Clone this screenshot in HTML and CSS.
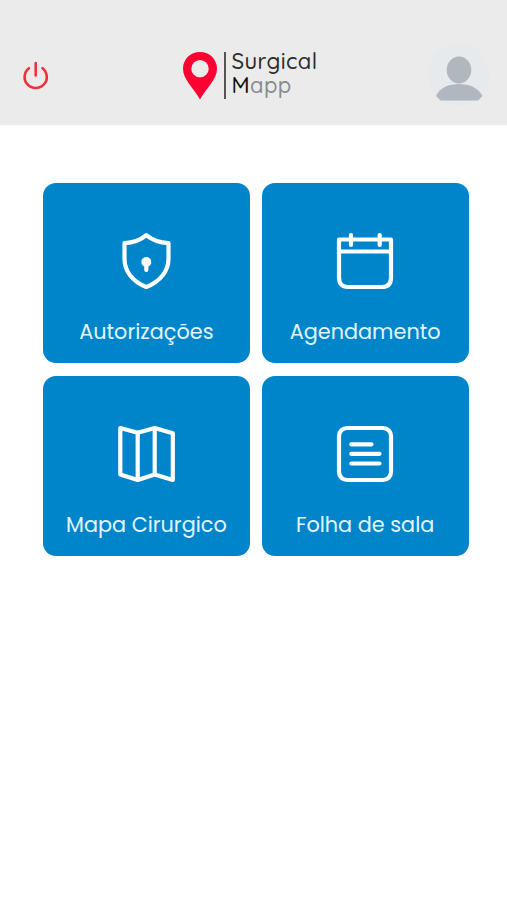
FILE: index.html
```html
<!DOCTYPE html>
<html lang="pt">
<head>
  <meta charset="UTF-8" />
  <meta name="viewport" content="width=device-width, initial-scale=1.0" />
  <title>Surgical Mapp</title>
  <link rel="stylesheet" href="styles.css">
</head>
<body>
  <header class="topbar">
    <button class="logout-button" aria-label="Sair">
      <svg width="28" height="30" viewBox="0 0 28 30" fill="none" stroke="#ee3239" stroke-width="2.6" stroke-linecap="round">
        <path d="M13.700 3v12.500M6.900 8.200a11.100 11.100 0 1 0 13.600 0" />
      </svg>
    </button>

    <div class="logo">
      <svg class="logo-pin" width="34" height="48" viewBox="0 0 34 48">
        <path fill="#ff0032" fill-rule="evenodd" d="M17 0C7.400 0 0 7.400 0 16.700 0 27.500 10.500 35.500 17 47.500 23.500 35.500 34 27.500 34 16.700 34 7.400 26.600 0 17 0ZM17 8a8.700 8.700 0 1 1 0 17.400A8.700 8.700 0 0 1 17 8Z" />
      </svg>
      <div class="logo-text">
        <span class="logo-surgical">Surgical</span>
        <span class="logo-mapp"><b>M</b>app</span>
      </div>
    </div>

    <div class="avatar">
      <svg width="62" height="62" viewBox="0 0 62 62">
        <circle cx="31" cy="31" r="31" fill="#e7eaed" />
        <ellipse cx="31" cy="26" rx="12.300" ry="13.500" fill="#b0b7be" />
        <path d="M8 52C12 43.500 21 40 31 40S50 43.500 54.500 52L50 56.500H12.500Z" fill="#b0b7be" />
      </svg>
    </div>
  </header>

  <main class="menu">
    <a class="card">
      <svg class="card-icon" viewBox="0 0 60 60">
        <path d="M30.300 4.200C25 8.800 17.500 11.700 8.500 12.200V28C8.500 40 16.500 50.500 30.300 56 44 50.500 52.500 40 52.500 28V12.200C43.500 11.700 35.800 8.800 30.300 4.200Z" />
        <circle class="solid" cx="30.300" cy="31" r="5" />
        <path d="M30.300 31v8" />
      </svg>
      <span class="card-label">Autorizações</span>
    </a>

    <a class="card">
      <svg class="card-icon" viewBox="0 0 60 60">
        <path d="M4 8.500H56V46.500Q56 56 47 56H13Q4 56 4 46.500ZM4 20.500H56M16 4v10M44.700 4v10" />
      </svg>
      <span class="card-label">Agendamento</span>
    </a>

    <a class="card">
      <svg class="card-icon" viewBox="0 0 60 60">
        <path d="M4.300 4L21.700 8.700 38.700 4 56.800 9.300V56L38.700 50.500 21.700 56 4.300 50.500ZM21.700 8.700V56M38.700 4V50.500" />
      </svg>
      <span class="card-label">Mapa Cirurgico</span>
    </a>

    <a class="card">
      <svg class="card-icon" viewBox="0 0 60 60">
        <rect x="4" y="4" width="52" height="52" rx="8" />
        <path d="M16.300 20.300H36.500M16.300 29.800H44.500M16.300 39.500H44.500" />
      </svg>
      <span class="card-label">Folha de sala</span>
    </a>
  </main>
</body>
</html>
```
FILE: styles.css
```css
* {
  box-sizing: border-box;
}

body {
  margin: 0;
  min-height: 100vh;
  background-color: #fff;
  font-family: Poppins, "Open Sans", sans-serif;
}

.topbar {
  display: grid;
  grid-template-columns: 1fr auto 1fr;
  align-items: center;
  height: 125px;
  padding: 25px 17px 0 22px;
  background-color: #ebebeb;
}

.logout-button {
  justify-self: start;
  padding: 0;
  border: none;
  background: none;
  cursor: pointer;
}

.logout-button svg,
.logo-pin,
.avatar svg {
  display: block;
}

.logo {
  display: flex;
  align-items: center;
  gap: 7px;
  margin: 1px 12px 0 0;
}

.logo-text {
  display: flex;
  flex-direction: column;
  height: 47px;
  padding-left: 6px;
  border-left: 2px solid #555;
  color: #2b2b2b;
  font-family: Quicksand, Comfortaa, Poppins, sans-serif;
  font-size: 22px;
  font-weight: 500;
  line-height: 24px;
  letter-spacing: 0.4px;
}

.logo-surgical {
  margin-top: -3px;
}

.logo-mapp {
  color: #8a8a8a;
}

.logo-mapp b {
  color: #111;
  font-weight: 500;
}

.avatar {
  justify-self: end;
}

.menu {
  display: grid;
  grid-template-columns: 1fr 1fr;
  grid-auto-rows: 180px;
  gap: 13px 12px;
  padding: 58px 38.500px 0 43px;
}

.card {
  display: flex;
  flex-direction: column;
  align-items: center;
  padding-top: 48px;
  border-radius: 13px;
  background-color: #0085ca;
  color: #e2f5ff;
  cursor: pointer;
}

.card-icon {
  width: 60px;
  height: 60px;
  fill: none;
  stroke: #fff;
  stroke-width: 4.2;
  stroke-linecap: round;
  stroke-linejoin: round;
}

.card-icon .solid {
  fill: #fff;
  stroke: none;
}

.card-label {
  margin-top: 26px;
  font-size: 20.8px;
  line-height: 30px;
  white-space: nowrap;
}
```
